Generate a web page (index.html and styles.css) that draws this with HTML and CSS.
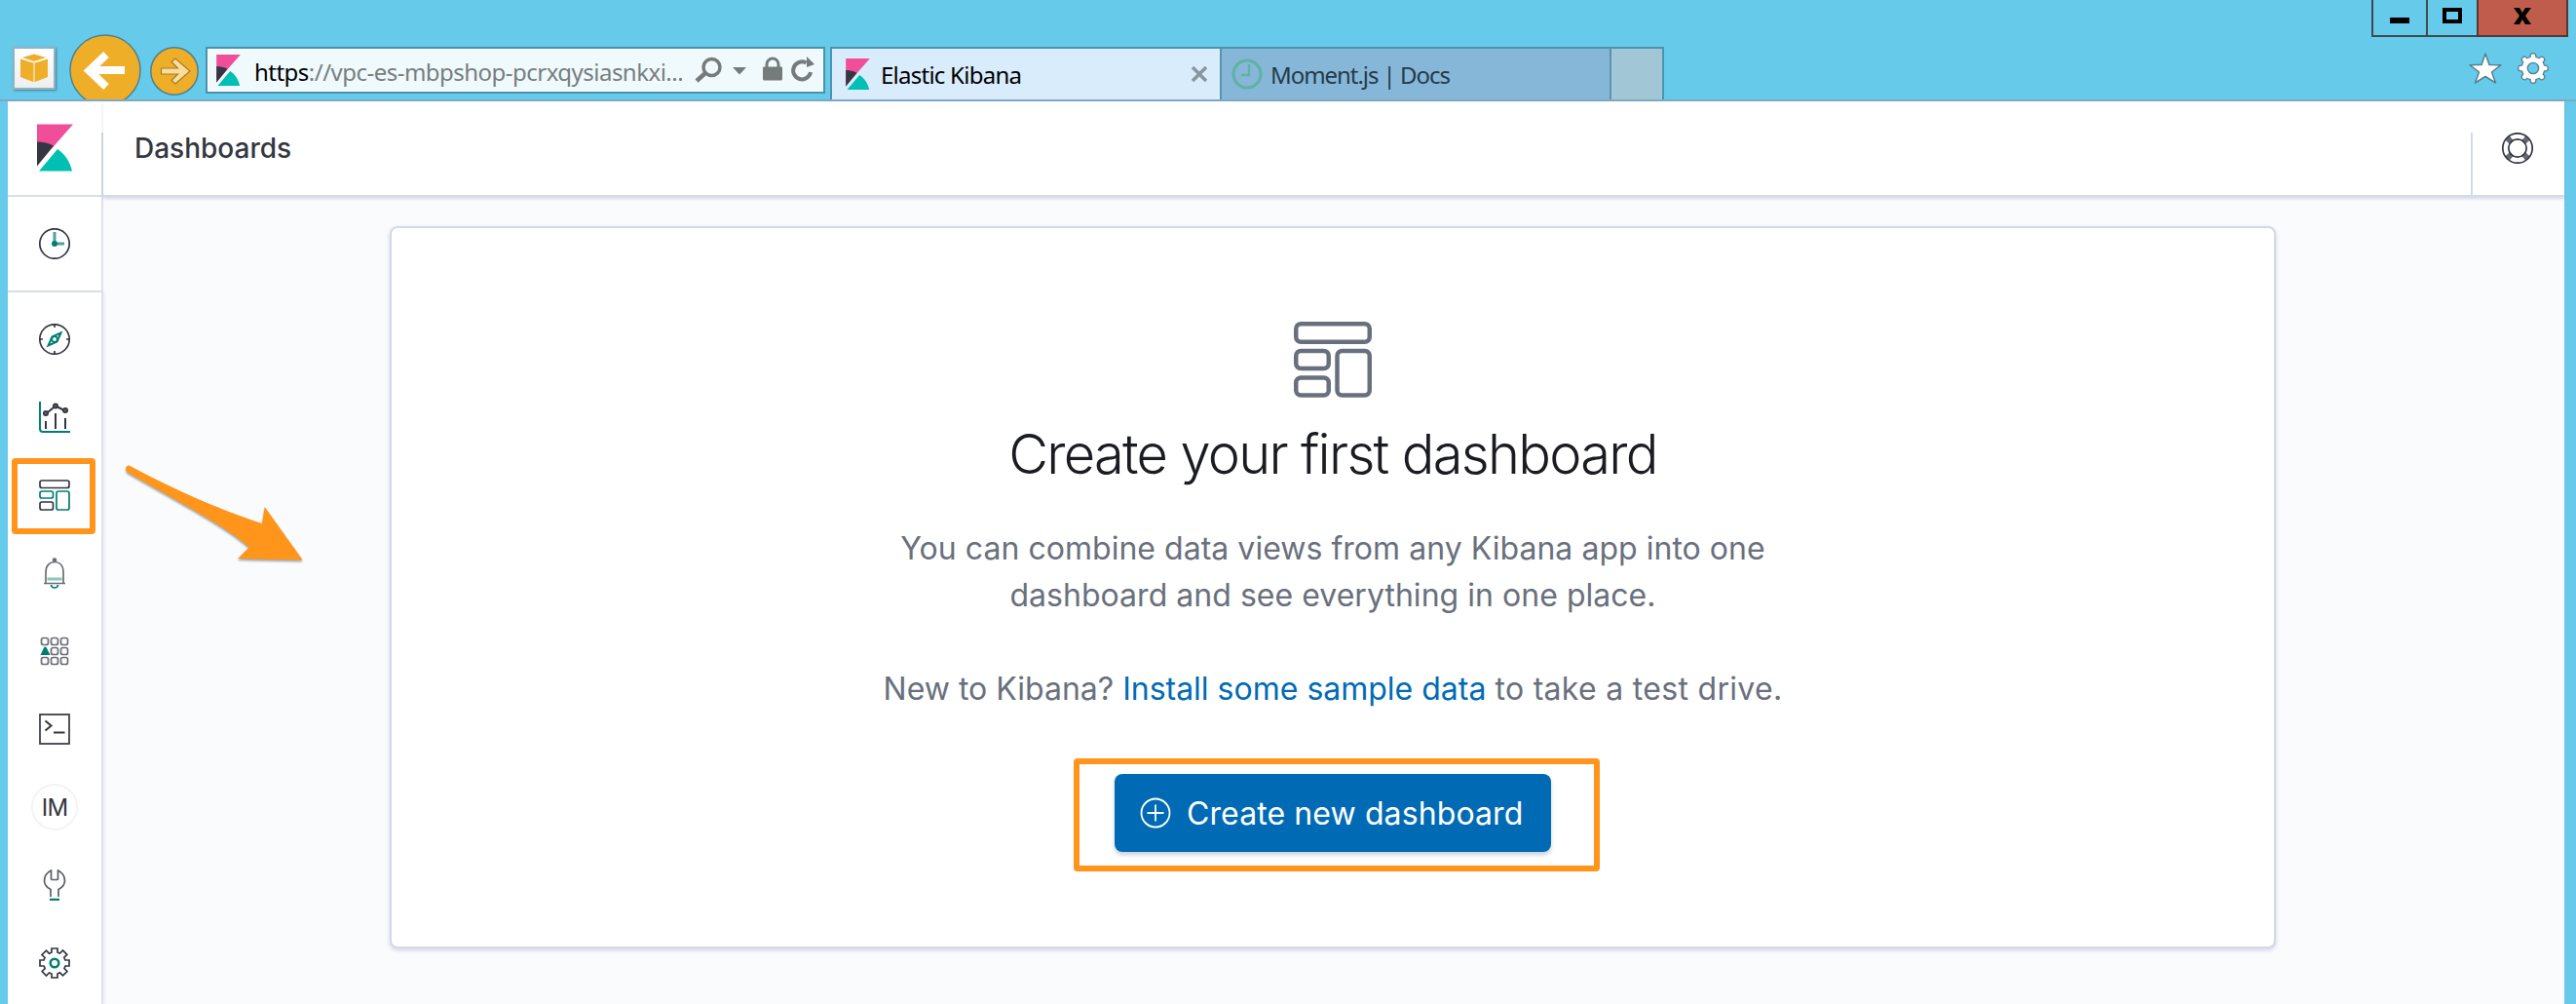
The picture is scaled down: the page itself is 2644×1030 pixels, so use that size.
FILE: index.html
```html
<!DOCTYPE html>
<html lang="en">
<head>
<meta charset="utf-8">
<title>Elastic Kibana</title>
<link rel="stylesheet" href="styles.css">
</head>
<body>
<svg class="defs" aria-hidden="true">
  <symbol id="kibana" viewBox="0 0 37 48">
    <path fill="#f04e98" d="M0 0h37L0 42z"/>
    <path fill="#343741" d="M0 18v25l17-21C12 19.500 6 18 0 18z"/>
    <path fill="#00bfb3" d="M21 25.500L2 48h34c-2-9.500-7.500-17.500-15-22.500z"/>
  </symbol>
</svg>
<header class="chrome">
  <div class="titlebar">
    <button class="win-btn minimize" aria-label="Minimize"><span class="dash"></span></button>
    <button class="win-btn maximize" aria-label="Maximize"><span class="square"></span></button>
    <button class="win-btn close" aria-label="Close"><svg width="20" height="17" viewBox="0 0 20 17"><path d="M1 0h6l3 5 3-5h6l-6 8.300 6 8.700h-6l-3-5-3 5H1l6-8.700z"/></svg></button>
  </div>
  <div class="toolbar">
    <span class="app-icon"><svg width="30" height="30" viewBox="0 0 30 30"><path fill="#efae27" d="M1 5.500L14 9.500V29L1 24zM29 5.500L16 9.500V29l13-5zM3 4L15 .5 27 4 15 8z"/><path stroke="#f7d48d" stroke-width="2" d="M15 9v20"/></svg></span>
    <button class="back" aria-label="Back"><svg width="74" height="74" viewBox="0 0 74 74"><circle cx="37" cy="37" r="36" fill="#efae27" stroke="#4f8190" stroke-width="1.500"/><path fill="none" stroke="#fff" stroke-width="8" d="M57 37H20M38 21L20.500 37.500 38 54"/></svg></button>
    <button class="forward" aria-label="Forward"><svg width="50" height="50" viewBox="0 0 50 50"><circle cx="25" cy="25" r="24.200" fill="#efae27" stroke="#4f8190" stroke-width="1.500"/><path fill="#fbdc9b" stroke="#a27c2c" stroke-width="1.200" d="M11.500 22h17L22 15.500 26 12l15 13-15 13-4-3.500 6.500-6.500h-17z"/></svg></button>
    <div class="address">
      <svg class="favicon" width="25" height="32"><use href="#kibana"/></svg>
      <span class="url"><b>https</b>://vpc-es-mbpshop-pcrxqysiasnkxi...</span>
      <svg class="addr-icons" width="124" height="30" viewBox="0 0 124 30"><g fill="none" stroke="#757b7b"><circle cx="17.500" cy="12" r="8.500" stroke-width="3.500"/><path stroke-width="4.500" d="M11 18L2 26"/><path stroke-width="4" d="M119 17a9 9 0 1 1-4.500-9.500"/><path stroke-width="3" d="M74 14V9a6 6 0 0 1 12 0v5"/></g><path fill="#757b7b" d="M39 12h14l-7 7.500zM70 12.500q0-1 1-1h18q1 0 1 1V24q0 1.500-1.500 1.500h-17Q70 25.500 70 24zM115 1l8 8-8 3z"/></svg>
    </div>
    <nav class="tabs">
      <div class="tab active"><svg class="favicon" width="25" height="32"><use href="#kibana"/></svg><span class="tab-label elastic">Elastic Kibana</span><svg class="tab-close" width="16" height="16" viewBox="0 0 16 16"><path stroke="#8a969e" stroke-width="3.500" d="M1 1l14 14M15 1L1 15"/></svg></div>
      <div class="tab"><svg class="moment-icon" width="32" height="32" viewBox="0 0 32 32"><g fill="none" stroke="#61b2a6"><circle cx="16" cy="16" r="14" stroke-width="3.200"/><path stroke-width="2.500" d="M18 6v11h-8"/></g></svg><span class="tab-label moment">Moment.js | Docs</span></div>
      <div class="new-tab"></div>
    </nav>
    <div class="tools">
      <svg width="34" height="34" viewBox="0 0 34 34"><path fill="#fff" stroke="#56808e" stroke-width="1.500" stroke-linejoin="round" d="M17 2l4 11.500 12 .2-9.500 7.300 4 11L17 25.500 6.500 32l4-11L1 13.700l12-.2z"/></svg>
      <svg width="34" height="34" viewBox="0 0 34 34"><g id="cog" fill="none" stroke="#56808e"><path stroke-width="7" stroke-linecap="round" d="M17 4.500v25M4.500 17h25M8.200 8.200l17.600 17.600M25.800 8.200L8.200 25.800"/><circle cx="17" cy="17" r="8.500" stroke-width="8"/></g><path stroke="#fff" stroke-width="4.500" stroke-linecap="round" d="M17 4.500v25M4.500 17h25M8.200 8.200l17.600 17.600M25.800 8.200L8.200 25.800"/><circle cx="17" cy="17" r="8.500" fill="#66caea" stroke="#fff" stroke-width="5.500"/><circle cx="17" cy="17" r="5.700" fill="none" stroke="#56808e" stroke-width="1.300"/></svg>
    </div>
  </div>
</header>
<div class="app">
  <aside class="sidebar">
    <div class="logo"><svg width="37" height="49"><use href="#kibana"/></svg></div>
    <div class="recent"><svg class="icon" viewBox="0 0 32 32"><circle cx="16" cy="16" r="15.200"/><path class="teal" stroke-width="3" opacity=".7" d="M16 4v12h10"/><circle cx="16" cy="16" r="3" class="teal-fill"/></svg></div>
    <ul class="nav">
      <li><svg class="icon" viewBox="0 0 32 32"><circle cx="16" cy="16" r="15.200"/><path d="M16 1v3M16 28v3M1 16h3M28 16h3"/><path class="teal" stroke-width="2" d="M22.500 9.500L18.500 18.500 9.500 22.500 13.500 13.500z"/><circle class="teal" cx="16" cy="16" r="2.800"/></svg></li>
      <li><svg class="icon" viewBox="0 0 32 32"><path class="teal" stroke-width="2" d="M1 0v28q0 3 3 3h28"/><path stroke-width="2" d="M7 20v8M17 12v16M27 17v11M9 11l6-5M19 5.500l6 3"/><g fill="#5c5f68"><circle cx="7" cy="12" r="2.200"/><circle cx="17" cy="4.500" r="2.200"/><circle cx="27" cy="9" r="2.200"/></g></svg></li>
      <li class="marked"><svg class="icon" viewBox="0 0 32 32"><rect x="1" y="1" width="30" height="7.500" rx="2"/><rect class="teal" x="1" y="12" width="13.500" height="7" rx="2"/><rect x="1" y="23" width="13.500" height="8" rx="2"/><rect class="teal" x="18" y="12" width="13" height="19" rx="2"/></svg></li>
      <li><svg class="icon" viewBox="0 0 32 32"><g stroke="#6b6e76"><circle cx="16" cy="2.500" r="1.500" fill="#6b6e76"/><path d="M7 26V15c0-7 4-10.500 9-10.500S25 8 25 15v11M5 26.500h22"/></g><path stroke="#8fc5be" stroke-width="3" d="M8.500 22h15"/><path class="teal" d="M12.500 28c.5 4 6.500 4 7 0"/></svg></li>
      <li><svg class="icon" viewBox="0 0 32 32"><g stroke="#6b6e76"><rect x="2.500" y="2.500" width="7" height="7" rx="2"/><rect x="12.500" y="2.500" width="7" height="7" rx="2"/><rect x="22.500" y="2.500" width="7" height="7" rx="2"/><rect x="12.500" y="12.500" width="7" height="7" rx="2"/><rect x="22.500" y="12.500" width="7" height="7" rx="2"/><rect x="2.500" y="22.500" width="7" height="7" rx="2"/><rect x="12.500" y="22.500" width="7" height="7" rx="2"/><rect x="22.500" y="22.500" width="7" height="7" rx="2"/></g><path class="teal-fill" d="M6.300 11.500q1 0 1.500 1l3.700 7.500H1.500l3.500-7.500q.5-1 1.300-1z"/></svg></li>
      <li><svg class="icon" viewBox="0 0 32 32"><rect x="1" y="1" width="30" height="30"/><path stroke-width="2" d="M6.500 7.500l6 5-6 5M15 19.500h11.500"/></svg></li>
      <li><span class="avatar">IM</span></li>
      <li><svg class="icon" viewBox="0 0 32 32"><g stroke="#5c5f68"><path d="M12 28v-7.500C8 18.500 5.500 15 5.500 11.500 5.500 7 8.500 3 12.500 1v8.500q0 1 1 1h5q1 0 1-1V1c4 2 7 6 7 10.500 0 3.500-2.500 7-6.500 9V28"/></g><path class="teal" stroke-width="2.200" d="M11 30.800h10"/></svg></li>
      <li><svg class="icon" viewBox="0 0 32 32"><path d="M13 1h6v4l2.500 1 3-3 4.300 4.300-3 3L27 13h4v6h-4l-1 2.500 3 3-4.500 4.300-3-3L19 27v4h-6v-4l-2.500-1-3 3L3.200 24.500l3-3L5 19H1v-6h4l1-2.500-3-3L7.500 3.200l3 3L13 5z"/><circle cx="16" cy="16" r="4.300" class="teal" stroke-width="2.500"/></svg></li>
    </ul>
  </aside>
  <main class="main">
    <header class="topbar">
      <div class="crumb">Dashboards</div>
      <div class="help"><svg class="icon" viewBox="0 0 32 32"><circle cx="16" cy="16" r="15.200"/><circle cx="16" cy="16" r="9.200"/><path stroke-width="3.200" d="M4.500 6.500l5 4.500M6.500 4.500l4.500 5M27.500 6.500l-5 4.500M25.500 4.500l-4.500 5M4.500 25.500l5-4.500M6.500 27.500l4.500-5M27.500 25.500l-5-4.500M25.500 27.500l-4.500-5" stroke-opacity=".75"/></svg></div>
    </header>
    <section class="content">
      <article class="card">
        <svg class="hero" width="80" height="80" viewBox="0 0 80 80"><g fill="none" stroke="#69707d" stroke-width="4.500"><rect x="2.250" y="2.250" width="75.500" height="18.500" rx="5"/><rect x="2.250" y="30" width="33.500" height="18" rx="5"/><rect x="2.250" y="57.500" width="33.500" height="18" rx="5"/><rect x="44.500" y="30" width="33.250" height="45.500" rx="5"/></g></svg>
        <h1>Create your first dashboard</h1>
        <p class="lead">You can combine data views from any Kibana app into one<br>dashboard and see everything in one place.</p>
        <p class="sample">New to Kibana? <a>Install some sample data</a> <span class="drive">to take a test drive.</span></p>
        <div class="cta-frame"><button class="cta"><svg width="32" height="32" viewBox="0 0 32 32" fill="none" stroke="#fff" stroke-width="1.800"><circle cx="16" cy="16" r="14.500"/><path d="M16 7.500v17M7.500 16h17"/></svg><span>Create new dashboard</span></button></div>
      </article>
    </section>
  </main>
</div>
<svg class="pointer" width="200" height="120" viewBox="0 0 200 120"><path fill="#ff951a" d="M13.500 18C65 46 115 66 149 77l2.700-17 39 54.500-66.700-1.500 11.700-11.500C112 80 60 53 11 24.500c-4-3-1-8.500 2.500-6.500z"/></svg>
</body>
</html>
```

FILE: styles.css
```css
* { box-sizing: border-box; }
body { margin: 0; width: 2644px; height: 1030px; overflow: hidden; background: #66caea; font-family: Inter, "Liberation Sans", sans-serif; display: flex; flex-direction: column; position: relative; }
.defs { position: absolute; width: 0; height: 0; }
button { padding: 0; border: 0; background: none; font: inherit; display: block; }
svg { display: block; flex: none; }
h1, p, ul { margin: 0; padding: 0; }

.chrome { height: 104px; border-bottom: 2px solid #7fa9c6; overflow: hidden; flex: none; }
.titlebar { height: 38px; display: flex; justify-content: flex-end; padding-right: 8px; }
.win-btn { height: 38px; border: solid #3f4a50; border-width: 0 0 2px 2px; display: flex; justify-content: center; }
.minimize { width: 56px; }
.maximize { width: 52px; }
.close { width: 94px; background: #c05c4c; border-right-width: 2px; border-color: #5b3530; padding-top: 8px; }
.dash { width: 20px; height: 6px; background: #000; margin-top: 18px; }
.square { width: 20px; height: 16px; border: 4px solid #000; margin-top: 8px; }
.toolbar { height: 64px; display: flex; align-items: flex-start; padding-left: 13px; }
.app-icon { width: 44px; height: 44px; margin-top: 10px; border: 2px solid #8ab5c5; background: linear-gradient(#fff, #eee); display: grid; place-items: center; box-shadow: 1px 1px 2px #527c8b; }
.back { margin: -3px 0 0 14px; }
.forward { margin: 10px 0 0 9px; }
.address { width: 636px; height: 48px; margin: 10px 0 0 7px; background: #f0fafd; border: 2px solid #4a91aa; padding-left: 9px; box-shadow: inset 0 0 0 1px #fff; display: flex; align-items: center; font-family: "Noto Sans", sans-serif; }
.url { margin: 2px 0 0 14px; width: 440px; font-size: 24px; letter-spacing: -.52px; color: #777e80; white-space: nowrap; }
.url b { font-weight: 400; color: #000; }
.addr-icons { margin-left: 12px; }
.tabs { display: flex; margin: 10px 0 0 5px; height: 54px; border: solid #4c94ae; border-width: 2px 2px 0 2px; font-family: "Noto Sans", sans-serif; font-size: 24px; width: 856px; }
.tab { width: 400px; display: flex; align-items: center; background: #86b7d8; padding-left: 10px; color: #253b48; border-right: 2px solid #5b93ae; }
.tab.active { background: #d9ecfc; color: #000; padding-left: 14px; }
.tab-label { white-space: nowrap; padding-top: 1px; }
.elastic { margin-left: 11px; width: 319px; letter-spacing: -.75px; }
.moment { margin-left: 8px; letter-spacing: -1.05px; }
.new-tab { flex: 1; background: #a1c7d7; }
.tools { margin: 15px 27px 0 auto; display: flex; gap: 15px; }

.app { margin: 0 12px 0 8px; height: 926px; display: flex; background: #fafbfd; }
.sidebar { width: 98px; flex: none; background: #fff; display: flex; flex-direction: column; }
.logo { height: 98px; border-bottom: 2px solid #d9dfe9; padding: 23px 0 0 30px; background: linear-gradient(#d3dae6, #d3dae6) 96px 32px / 2px 64px no-repeat; }
.recent { height: 98px; width: 98px; border-bottom: 2px solid #d9dfe9; border-right: 2px solid #dde2ec; display: grid; place-items: center; }
.nav { list-style: none; flex: 1; padding-top: 8px; border-right: 2px solid #dde2ec; box-shadow: 2px 0 2px rgba(150,160,190,.12); }
.nav li { height: 80px; display: grid; place-items: center; }
.nav .marked { width: 86px; height: 78px; margin: 2px 0 0 4px; border: 6px solid #ff951a; border-radius: 4px; padding: 0 0 2px 2px; }
.icon { width: 32px; height: 32px; fill: none; stroke: #343741; stroke-width: 1.7; }
.teal { stroke: #017d73; }
.teal-fill { fill: #017d73; stroke: none; }
.avatar { width: 48px; height: 48px; border: 2px solid #f4f4f5; border-radius: 50%; display: grid; place-items: center; font-size: 24px; font-weight: 400; color: #343741; letter-spacing: -.8px; }
.main { flex: 1; min-width: 0; }
.topbar { height: 98px; background: #fff; border-bottom: 2px solid #d3dae6; box-shadow: 0 2px 3px rgba(130,140,175,.3); display: flex; justify-content: space-between; padding-top: 32px; }
.crumb { padding-left: 32px; font-size: 28px; line-height: 33px; font-weight: 500; color: #343741; }
.help { width: 96px; border-left: 2px solid #d3dae6; padding-left: 30px; }
.content { padding: 30px 0 0 294px; }
.card { width: 1936px; height: 741px; background: #fff; border: 2px solid #d3dae6; border-radius: 8px; box-shadow: 0 2px 4px rgba(120,130,170,.3); display: flex; flex-direction: column; align-items: center; padding-top: 96px; text-align: center; color: #69707d; font-size: 32px; }
h1 { margin-top: 24px; font-size: 56px; line-height: 64px; font-weight: 300; color: #1a1c21; letter-spacing: -1.7px; white-space: nowrap; }
.lead, .sample { line-height: 48px; white-space: nowrap; }
.lead { margin-top: 41px; letter-spacing: .03px; }
.sample { margin-top: 48px; }
.drive { letter-spacing: .3px; }
a { color: #006bb4; }
.cta-frame { width: 540px; height: 116px; border: 6px solid #ff951a; border-radius: 4px; margin: 47px 0 0 8px; padding: 10px 0 0 36px; }
.cta { width: 448px; height: 80px; background: #006bb4; color: #fff; border-radius: 8px; display: flex; align-items: center; padding-left: 26px; gap: 16px; box-shadow: 0 3px 4px rgba(70,100,140,.3); white-space: nowrap; letter-spacing: .1px; }
.pointer { position: absolute; left: 120px; top: 460px; filter: drop-shadow(0 2px 1px rgba(0,0,0,.35)); }
```
